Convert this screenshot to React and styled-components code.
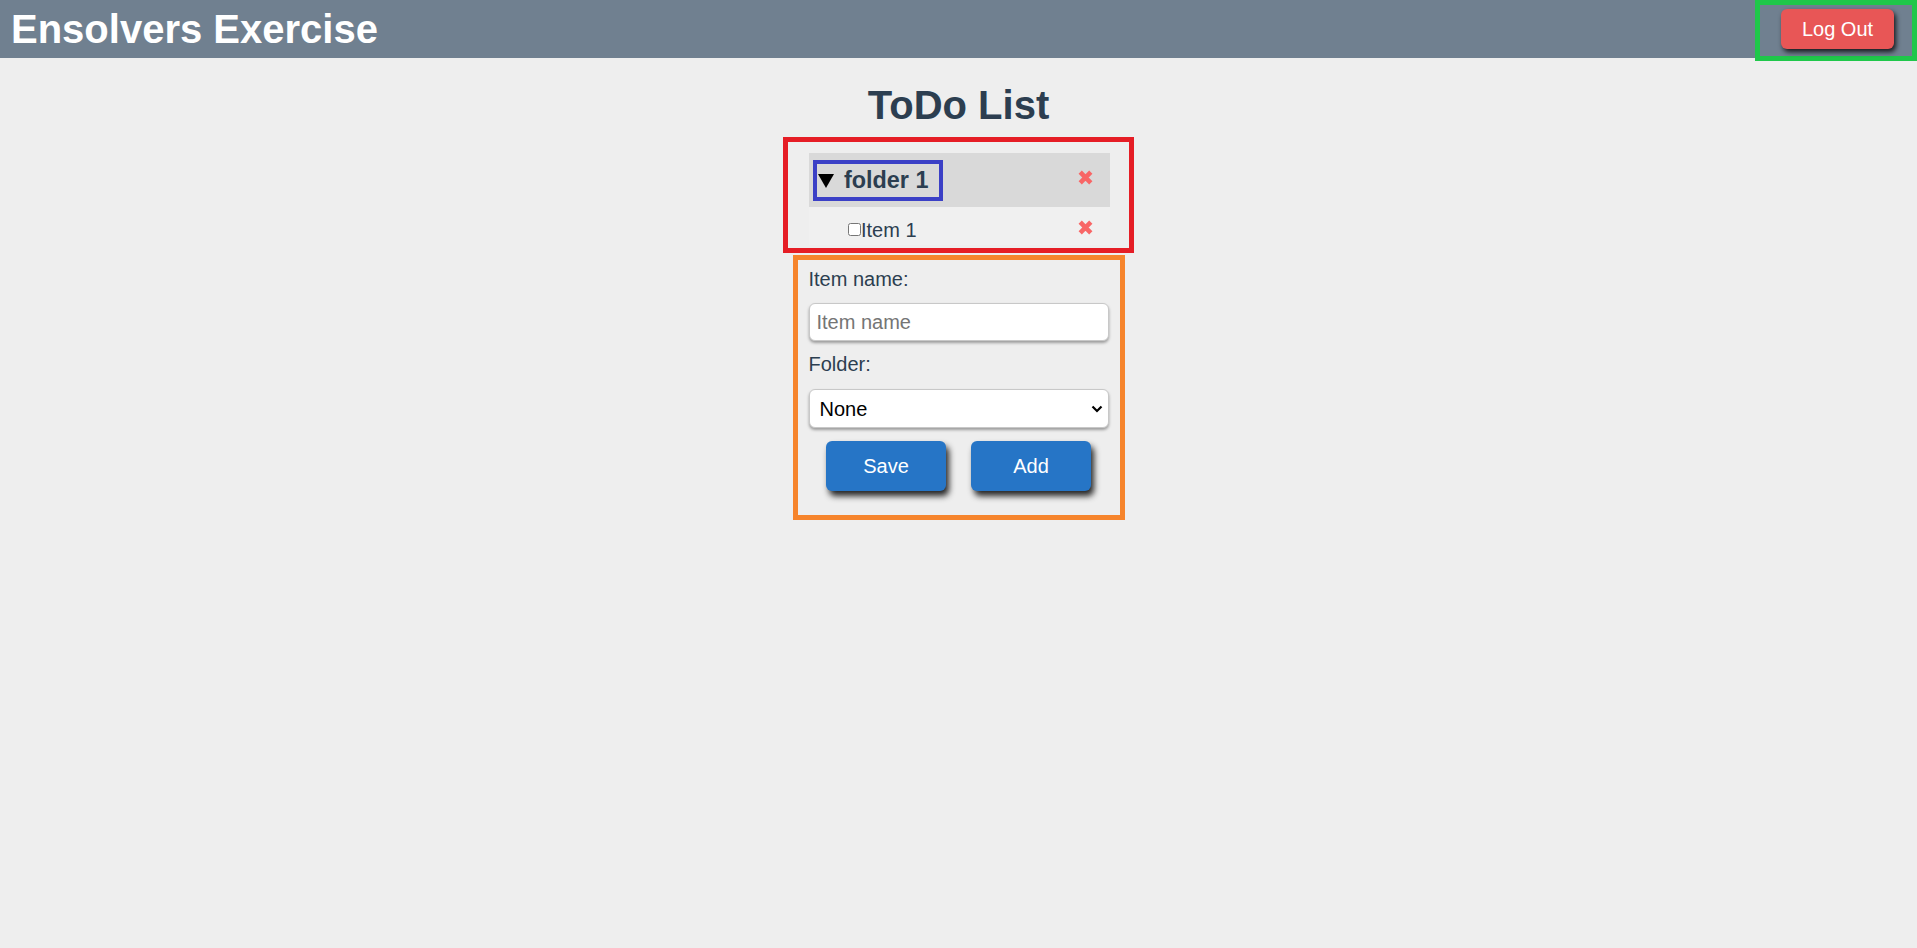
import React from "react";
import styled, { createGlobalStyle } from "styled-components";

const GlobalStyle = createGlobalStyle`
  body {
    margin: 0;
    background: #eeeeee;
    font-family: "Liberation Sans", Arial, sans-serif;
    font-size: 20px;
    color: #2c3e50;
  }
`;

const App = () => {
  return (
    <>
      <GlobalStyle />
      <TopBar>
        <Brand>Ensolvers Exercise</Brand>
        <Session>
          <LogOutButton>Log Out</LogOutButton>
        </Session>
      </TopBar>
      <Main>
        <PageTitle>ToDo List</PageTitle>
        <FolderList>
          <FolderHeader>
            <Summary>
              <svg width="16" height="14" viewBox="0 0 16 14">
                <polygon points="0,0 16,0 8,14" fill="#000" />
              </svg>
              folder 1
            </Summary>
            <DeleteIcon />
          </FolderHeader>
          <ItemRow>
            <Check>
              <input type="checkbox" />
              Item 1
            </Check>
            <DeleteIcon />
          </ItemRow>
        </FolderList>
        <ItemForm onSubmit={(e) => e.preventDefault()}>
          <Label>Item name:</Label>
          <TextInput placeholder="Item name" />
          <Label $gap={13}>Folder:</Label>
          <SelectWrap>
            <Select defaultValue="none">
              <option value="none">None</option>
              <option value="1">folder 1</option>
            </Select>
            <Chevron width="12" height="8" viewBox="0 0 12 8">
              <path
                d="M1.5 1.5 L6 6 L10.5 1.5"
                fill="none"
                stroke="#000"
                strokeWidth="2.2"
              />
            </Chevron>
          </SelectWrap>
          <ButtonRow>
            <ActionButton type="button">Save</ActionButton>
            <ActionButton type="button">Add</ActionButton>
          </ButtonRow>
        </ItemForm>
      </Main>
    </>
  );
};

const DeleteIcon = () => (
  <DeleteButton aria-label="delete">
    <svg width="15" height="15" viewBox="0 0 15 15">
      <path
        d="M2.2 2.2 L12.8 12.8 M12.8 2.2 L2.2 12.8"
        stroke="#f86666"
        strokeWidth="4.6"
        strokeLinecap="butt"
      />
    </svg>
  </DeleteButton>
);

export default App;

const TopBar = styled.header`
  display: flex;
  justify-content: space-between;
  align-items: flex-start;
  height: 58px;
  background: #708090;
`;

const Brand = styled.h1`
  margin: 0;
  padding-left: 11px;
  font-size: 40px;
  line-height: 58px;
  font-weight: bold;
  color: #fff;
`;

const Session = styled.div`
  box-sizing: border-box;
  width: 162px;
  height: 61px;
  padding: 4px 0 0 21px;
  border: 5px solid #1fc74a;
  position: relative;
  z-index: 1;
`;

const LogOutButton = styled.button`
  width: 113px;
  height: 40px;
  border: none;
  border-radius: 6px;
  background: #e85656;
  color: #fff;
  font-family: inherit;
  font-size: 20px;
  box-shadow: 2px 3px 5px rgba(0, 0, 0, 0.8);
  cursor: pointer;
`;

const Main = styled.main`
  display: flex;
  flex-direction: column;
  align-items: center;
`;

const PageTitle = styled.h1`
  margin: 24px 0 9px;
  font-size: 40px;
  line-height: 46px;
  color: #2c3e50;
`;

const FolderList = styled.section`
  box-sizing: border-box;
  width: 351px;
  padding: 11px 19px 3px 21px;
  border: 5px solid #e51d25;
`;

const FolderHeader = styled.div`
  display: flex;
  align-items: center;
  justify-content: space-between;
  height: 54px;
  padding: 0 17px 0 4px;
  background: #d9d9d9;
`;

const Summary = styled.div`
  box-sizing: border-box;
  display: flex;
  align-items: center;
  gap: 10px;
  width: 130px;
  height: 41px;
  padding: 1px 0 0 1px;
  border: 4px solid #3b40c6;
  font-size: 23.4px;
  font-weight: bold;
  color: #2c3e50;
`;

const ItemRow = styled.div`
  display: flex;
  align-items: center;
  justify-content: space-between;
  height: 29px;
  padding: 9px 17px 0 39px;
  background: #f0f0f0;
`;

const Check = styled.label`
  display: flex;
  align-items: center;
  font-size: 20px;
  color: #2c3e50;
  input {
    width: 13px;
    height: 13px;
    margin: 0 0 3px 0;
  }
`;

const DeleteButton = styled.span`
  display: flex;
  width: 15px;
  height: 15px;
  margin-top: -6px;
  cursor: pointer;
`;

const ItemForm = styled.form`
  box-sizing: border-box;
  display: flex;
  flex-direction: column;
  width: 332px;
  margin-top: 2px;
  padding: 8px 11px 24px;
  border: 5px solid #f6842c;
`;

const Label = styled.label`
  line-height: 23px;
  margin-bottom: ${(p) => p.$gap || 12}px;
  color: #2c3e50;
`;

const fieldStyles = `
  box-sizing: border-box;
  width: 300px;
  border: 1px solid #c8c8c8;
  border-radius: 6px;
  background: #fff;
  font-family: "Liberation Sans", Arial, sans-serif;
  font-size: 20px;
  box-shadow: 0 2px 3px rgba(0, 0, 0, 0.35);
  outline: none;
`;

const TextInput = styled.input`
  ${fieldStyles}
  height: 38px;
  margin-bottom: 12px;
  padding: 0 7px;
  color: #000;
  &::placeholder {
    color: #757575;
  }
`;

const SelectWrap = styled.div`
  position: relative;
  width: 300px;
  margin-bottom: 13px;
`;

const Select = styled.select`
  ${fieldStyles}
  display: block;
  height: 39px;
  padding: 0 10px;
  color: #000;
  appearance: none;
`;

const Chevron = styled.svg`
  position: absolute;
  right: 6px;
  top: 16px;
  pointer-events: none;
`;

const ButtonRow = styled.div`
  display: flex;
  justify-content: center;
  gap: 25px;
`;

const ActionButton = styled.button`
  width: 120px;
  height: 50px;
  border: none;
  border-radius: 6px;
  background: #2675c6;
  color: #fff;
  font-family: inherit;
  font-size: 20px;
  box-shadow: 3px 5px 6px rgba(0, 0, 0, 0.85);
  cursor: pointer;
`;
